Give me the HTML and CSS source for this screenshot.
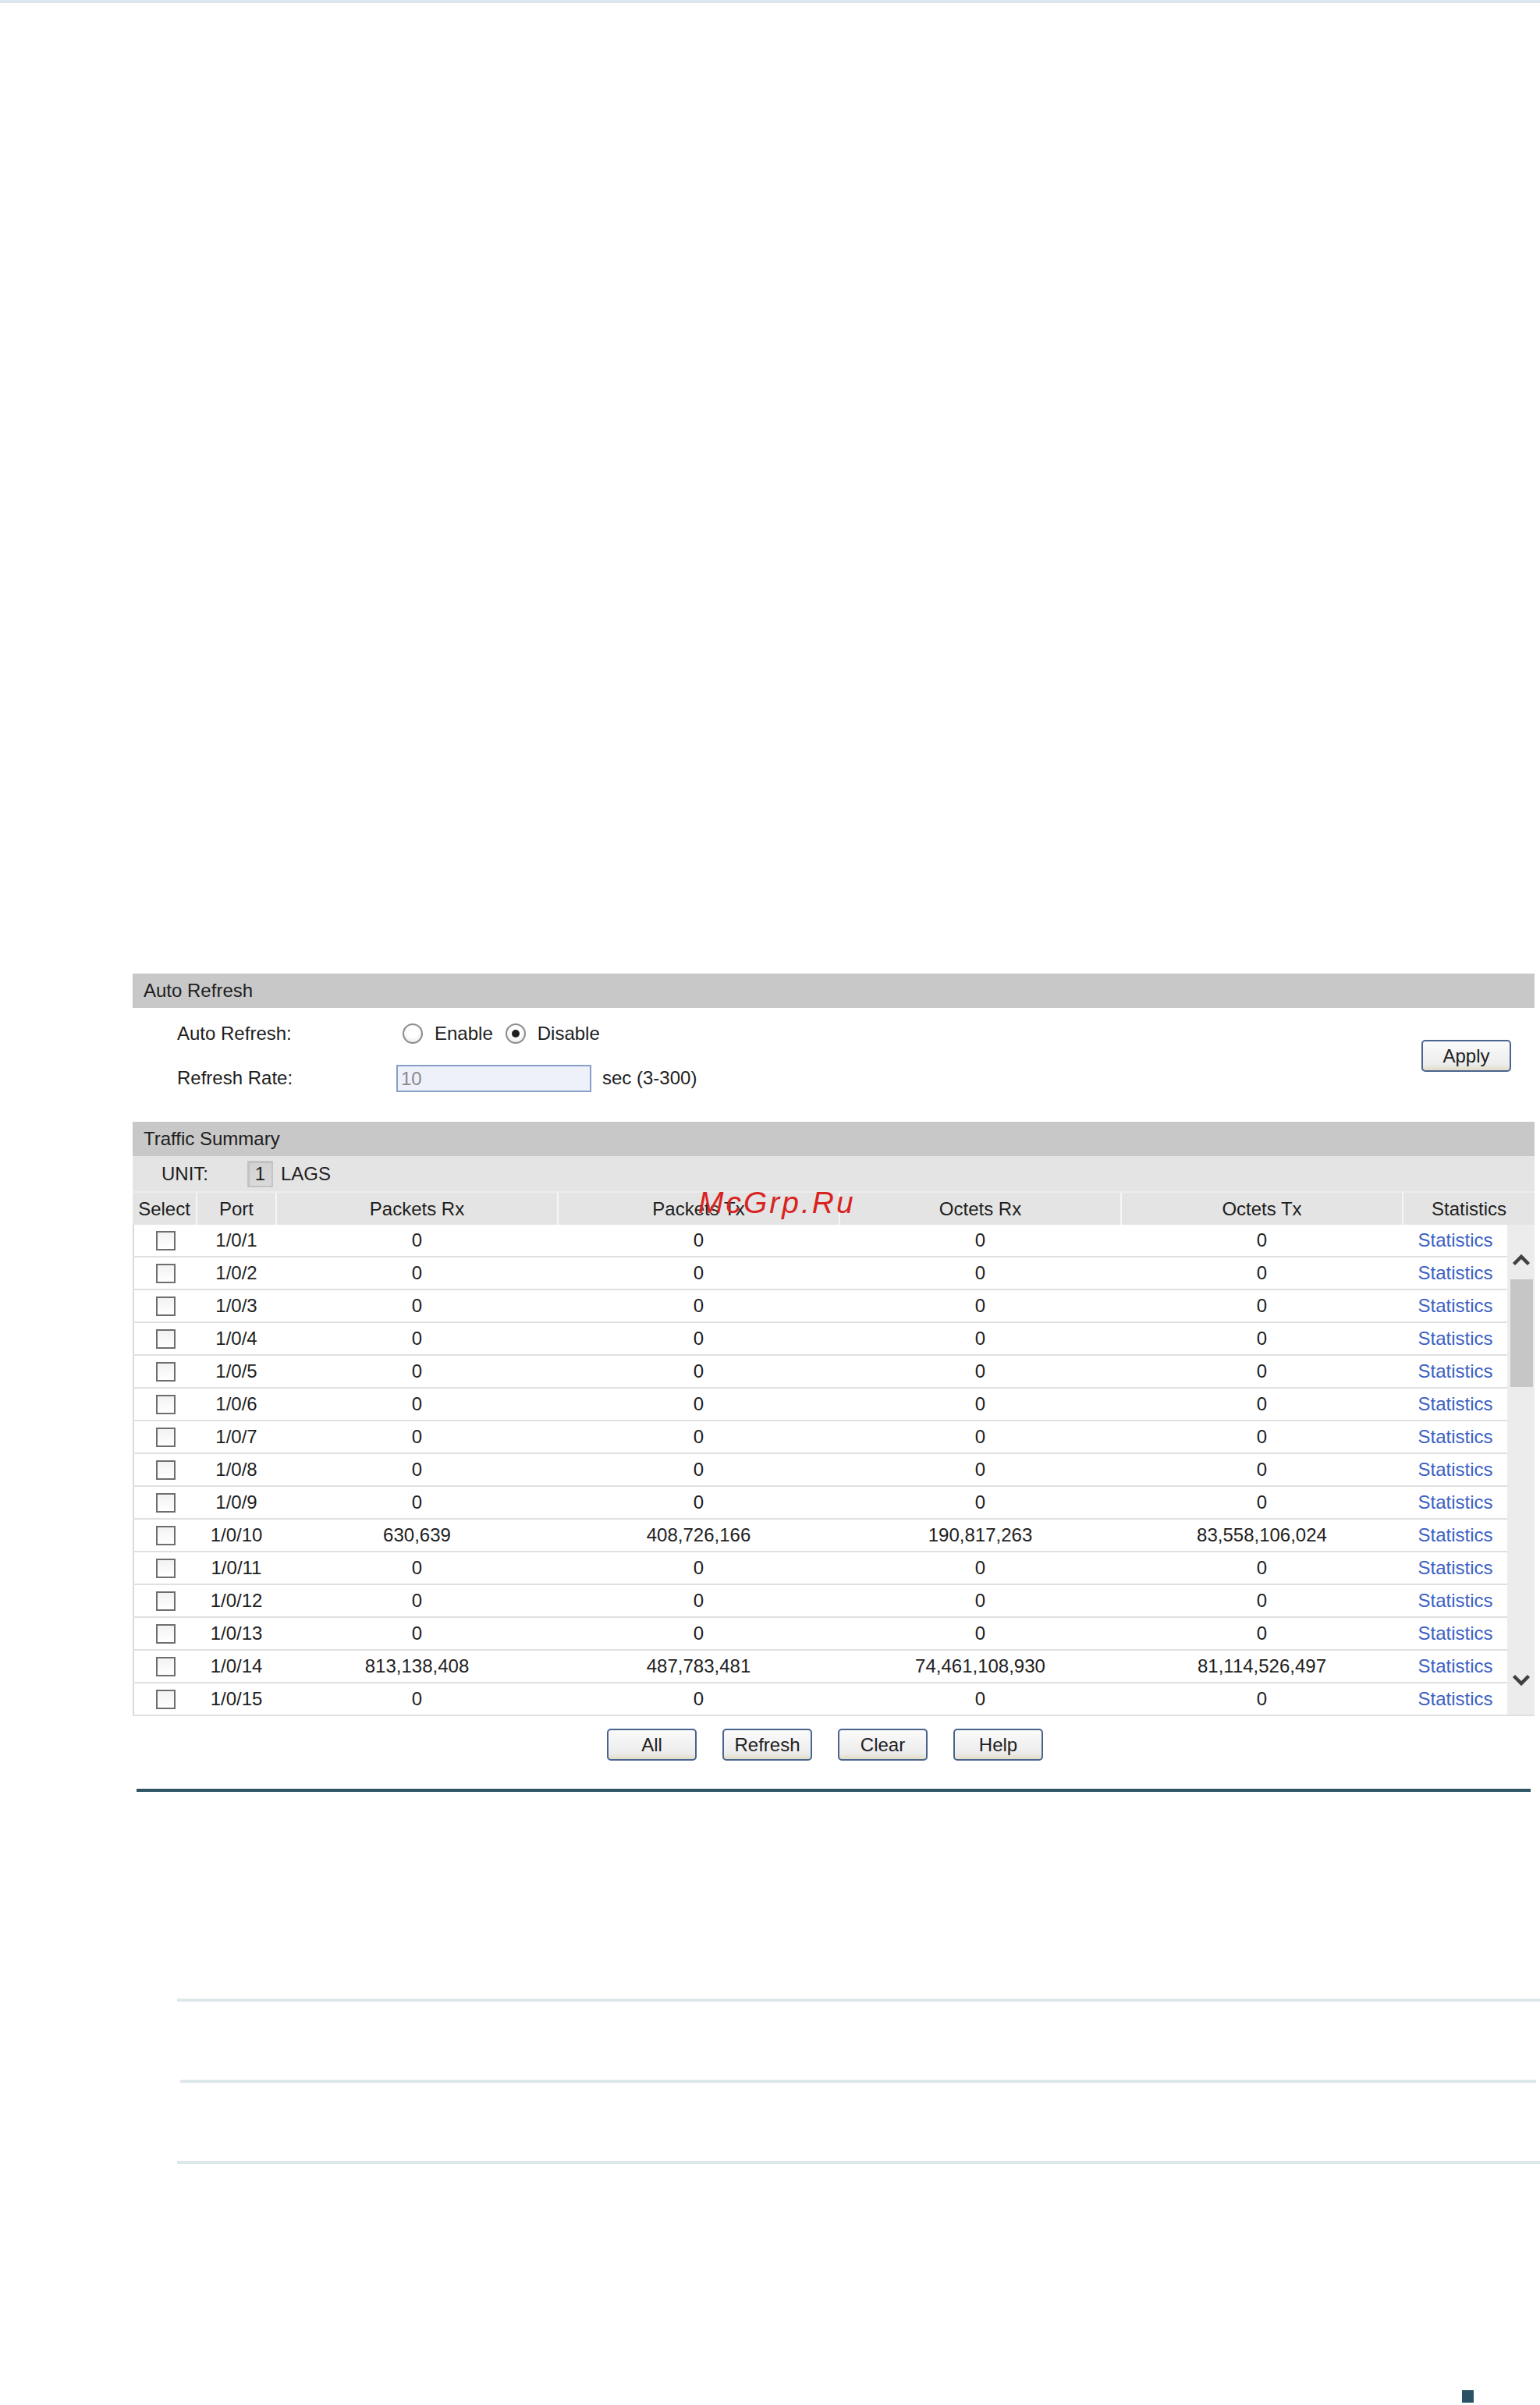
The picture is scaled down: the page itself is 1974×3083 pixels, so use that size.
FILE: index.html
```html
<!DOCTYPE html>
<html lang="en">
<head>
<meta charset="utf-8">
<title>Traffic Summary</title>
<link rel="stylesheet" href="styles.css">
</head>
<body>
<div class="topline"></div>

<main class="panel">
  <div class="section-head">Auto Refresh</div>
  <div class="form">
    <div class="form-grid">
      <div class="label">Auto Refresh:</div>
      <div class="value radios">
        <span class="radio"></span><span class="radio-text">Enable</span>
        <span class="radio checked"></span><span class="radio-text">Disable</span>
      </div>
      <div class="label">Refresh Rate:</div>
      <div class="value rate">
        <span class="textbox">10</span><span class="unit-text">sec (3-300)</span>
      </div>
    </div>
    <span class="btn">Apply</span>
  </div>

  <div class="section-head traffic">Traffic Summary</div>
  <div class="unit-row">
    <span class="unit-label">UNIT:</span>
    <span class="unit-box">1</span>
    <span class="lags">LAGS</span>
  </div>

  <div class="thead">
    <div class="th">Select</div>
    <div class="th">Port</div>
    <div class="th">Packets Rx</div>
    <div class="th">Packets Tx</div>
    <div class="th">Octets Rx</div>
    <div class="th">Octets Tx</div>
    <div class="th last">Statistics</div>
  </div>

  <div class="tbody">
    <div class="rows">
      <div class="tr"><span class="td"><span class="cb"></span></span><span class="td">1/0/1</span><span class="td">0</span><span class="td">0</span><span class="td">0</span><span class="td">0</span><span class="td link">Statistics</span></div>
      <div class="tr"><span class="td"><span class="cb"></span></span><span class="td">1/0/2</span><span class="td">0</span><span class="td">0</span><span class="td">0</span><span class="td">0</span><span class="td link">Statistics</span></div>
      <div class="tr"><span class="td"><span class="cb"></span></span><span class="td">1/0/3</span><span class="td">0</span><span class="td">0</span><span class="td">0</span><span class="td">0</span><span class="td link">Statistics</span></div>
      <div class="tr"><span class="td"><span class="cb"></span></span><span class="td">1/0/4</span><span class="td">0</span><span class="td">0</span><span class="td">0</span><span class="td">0</span><span class="td link">Statistics</span></div>
      <div class="tr"><span class="td"><span class="cb"></span></span><span class="td">1/0/5</span><span class="td">0</span><span class="td">0</span><span class="td">0</span><span class="td">0</span><span class="td link">Statistics</span></div>
      <div class="tr"><span class="td"><span class="cb"></span></span><span class="td">1/0/6</span><span class="td">0</span><span class="td">0</span><span class="td">0</span><span class="td">0</span><span class="td link">Statistics</span></div>
      <div class="tr"><span class="td"><span class="cb"></span></span><span class="td">1/0/7</span><span class="td">0</span><span class="td">0</span><span class="td">0</span><span class="td">0</span><span class="td link">Statistics</span></div>
      <div class="tr"><span class="td"><span class="cb"></span></span><span class="td">1/0/8</span><span class="td">0</span><span class="td">0</span><span class="td">0</span><span class="td">0</span><span class="td link">Statistics</span></div>
      <div class="tr"><span class="td"><span class="cb"></span></span><span class="td">1/0/9</span><span class="td">0</span><span class="td">0</span><span class="td">0</span><span class="td">0</span><span class="td link">Statistics</span></div>
      <div class="tr"><span class="td"><span class="cb"></span></span><span class="td">1/0/10</span><span class="td">630,639</span><span class="td">408,726,166</span><span class="td">190,817,263</span><span class="td">83,558,106,024</span><span class="td link">Statistics</span></div>
      <div class="tr"><span class="td"><span class="cb"></span></span><span class="td">1/0/11</span><span class="td">0</span><span class="td">0</span><span class="td">0</span><span class="td">0</span><span class="td link">Statistics</span></div>
      <div class="tr"><span class="td"><span class="cb"></span></span><span class="td">1/0/12</span><span class="td">0</span><span class="td">0</span><span class="td">0</span><span class="td">0</span><span class="td link">Statistics</span></div>
      <div class="tr"><span class="td"><span class="cb"></span></span><span class="td">1/0/13</span><span class="td">0</span><span class="td">0</span><span class="td">0</span><span class="td">0</span><span class="td link">Statistics</span></div>
      <div class="tr"><span class="td"><span class="cb"></span></span><span class="td">1/0/14</span><span class="td">813,138,408</span><span class="td">487,783,481</span><span class="td">74,461,108,930</span><span class="td">81,114,526,497</span><span class="td link">Statistics</span></div>
      <div class="tr"><span class="td"><span class="cb"></span></span><span class="td">1/0/15</span><span class="td">0</span><span class="td">0</span><span class="td">0</span><span class="td">0</span><span class="td link">Statistics</span></div>
    </div>
    <div class="scrollbar">
      <div class="sb-up">
        <svg width="24" height="16" viewBox="0 0 24 16"><path d="M2.5 13.5 L12 4 L21.5 13.5" fill="none" stroke="#404040" stroke-width="4.5" stroke-linejoin="miter"/></svg>
      </div>
      <div class="sb-thumb"></div>
      <div class="sb-space"></div>
      <div class="sb-down">
        <svg width="24" height="16" viewBox="0 0 24 16"><path d="M2.5 2.5 L12 12 L21.5 2.5" fill="none" stroke="#404040" stroke-width="4.5" stroke-linejoin="miter"/></svg>
      </div>
    </div>
  </div>

  <div class="btn-row">
    <span class="btn">All</span>
    <span class="btn">Refresh</span>
    <span class="btn">Clear</span>
    <span class="btn">Help</span>
  </div>

  <div class="watermark">McGrp.Ru</div>
</main>

<div class="rule-dark"></div>
<div class="rule-light first"></div>
<div class="rule-light second"></div>
<div class="rule-light third"></div>
<div class="page-mark"></div>
</body>
</html>
```

FILE: styles.css
```css
* { box-sizing: border-box; }

html, body {
  margin: 0;
  padding: 0;
  background: #ffffff;
}

body {
  width: 1974px;
  font-family: "Liberation Sans", Arial, sans-serif;
  font-size: 24px;
  color: #1e1e1e;
}

.topline {
  height: 4px;
  background: #dce6ec;
}

.panel {
  position: relative;
  margin: 1244px 0 0 170px;
  width: 1797px;
}

.section-head {
  height: 44px;
  line-height: 44px;
  padding-left: 14px;
  background: #c8c8c8;
  color: #1e1e1e;
}

.form {
  display: flex;
  align-items: center;
  justify-content: space-between;
  padding: 13px 30px 36px 57px;
}

.form-grid {
  display: grid;
  grid-template-columns: 281px auto;
  grid-auto-rows: 40px;
  row-gap: 17px;
  align-items: center;
}

.value {
  display: flex;
  align-items: center;
}

.radios { padding-left: 8px; }

.radio {
  width: 26px;
  height: 26px;
  border-radius: 50%;
  border: 2px solid #8c8c8c;
  background: radial-gradient(circle at 50% 40%, #ffffff 40%, #e2e2e2 100%);
  display: flex;
  align-items: center;
  justify-content: center;
}

.radio.checked::after {
  content: "";
  width: 10px;
  height: 10px;
  border-radius: 50%;
  background: #1f1f1f;
}

.radio-text {
  margin: 0 16px 0 15px;
}

.textbox {
  width: 250px;
  height: 35px;
  line-height: 31px;
  border: 2px solid #86a0c8;
  background: #eef0fa;
  color: #8a8a8a;
  padding-left: 4px;
}

.unit-text {
  margin-left: 14px;
}

.btn {
  display: inline-flex;
  align-items: center;
  justify-content: center;
  width: 115px;
  height: 41px;
  border: 2px solid #4a6490;
  border-radius: 5px;
  background: linear-gradient(#fbfbfb, #ececec 80%, #e2dcc4);
  color: #1e1e1e;
}

.unit-row {
  height: 45px;
  background: #e4e4e4;
  display: flex;
  align-items: center;
  padding-left: 37px;
}

.unit-label {
  width: 110px;
}

.unit-box {
  width: 33px;
  height: 34px;
  border: 2px solid #c4c4c4;
  background: linear-gradient(#d2d2d2, #dadada);
  box-shadow: inset 1px 1px 0 #bdbdbd;
  display: flex;
  align-items: center;
  justify-content: center;
  margin-right: 10px;
}

.thead {
  display: grid;
  grid-template-columns: 83px 102px 361px 361px 361px 361px 168px;
  height: 43px;
  background: #e4e4e4;
  border-top: 2px solid #ececec;
}

.th {
  display: flex;
  align-items: center;
  justify-content: center;
  border-right: 2px solid #f6f6f6;
}

.th.last { border-right: none; }

.tbody {
  display: flex;
  box-shadow: inset 2px 0 0 #dadada;
}

.rows {
  width: 1762px;
}

.tr {
  display: grid;
  grid-template-columns: 83px 102px 361px 361px 361px 361px 133px;
  height: 42px;
  border-bottom: 2px solid #e0e0e0;
}

.td {
  display: flex;
  align-items: center;
  justify-content: center;
  border-right: 2px solid #ffffff;
}

.td.link {
  color: #3b5fc4;
  border-right: none;
}

.cb {
  width: 25px;
  height: 25px;
  border: 2px solid #6e6e6e;
  background: linear-gradient(#f2f2f2, #ffffff);
  margin-left: 4px;
}

.scrollbar {
  width: 35px;
  display: flex;
  flex-direction: column;
  background: #ececec;
  border-bottom: 2px solid #e0e0e0;
}

.sb-up {
  height: 70px;
  display: flex;
  justify-content: center;
  padding-top: 37px;
}

.sb-thumb {
  height: 138px;
  margin: 0 2px 0 4px;
  background: #c6c6c6;
}

.sb-space { flex: 1; }

.sb-down {
  height: 70px;
  display: flex;
  justify-content: center;
  padding-top: 18px;
}

.btn-row {
  display: flex;
  gap: 33px;
  padding-left: 608px;
  margin-top: 16px;
}

.watermark {
  position: absolute;
  left: 725px;
  top: 274px;
  font-family: "Liberation Sans", Arial, sans-serif;
  font-style: italic;
  font-size: 39px;
  line-height: 39px;
  letter-spacing: 3px;
  color: #d9231f;
}

.rule-dark {
  margin: 36px 0 0 175px;
  width: 1787px;
  height: 4px;
  background: #2d5566;
}

.rule-light {
  height: 4px;
  background: #dde8eb;
}

.rule-light.first {
  margin: 265px 0 0 227px;
  width: 1747px;
}

.rule-light.second {
  margin: 100px 0 0 231px;
  width: 1738px;
}

.rule-light.third {
  margin: 100px 0 0 227px;
  width: 1747px;
}

.page-mark {
  margin: 290px 0 0 1874px;
  width: 15px;
  height: 16px;
  background: #2a5264;
}
```
